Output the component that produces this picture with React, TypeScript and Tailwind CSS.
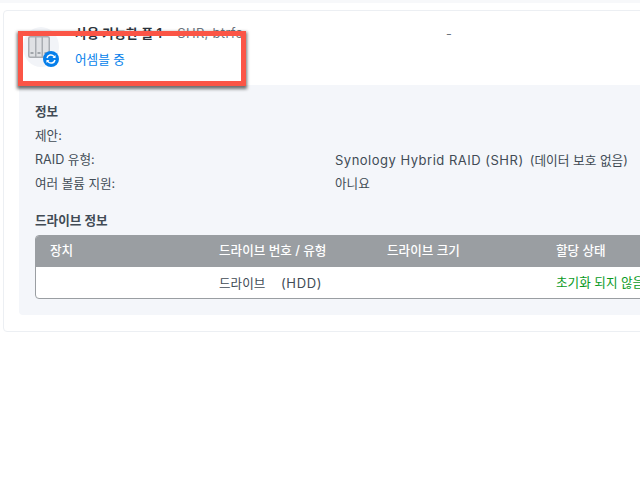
const font = "font-['Inter','Noto_Sans_CJK_KR',sans-serif]";

function PoolIcon() {
  return (
    <div className="relative w-9 h-10 shrink-0 rounded-[50%] bg-[#f2f4f8]">
      <svg width="22" height="22" viewBox="0 0 22 22" className="absolute left-[5px] top-[9px]">
        <rect x="0.75" y="0.75" width="20.500" height="20.500" rx="1.500" fill="#dfe1e4" stroke="#a9adb2" strokeWidth="1.500" />
        <path d="M7.750 1v20M14.250 1v20" stroke="#a9adb2" strokeWidth="1.500" />
        <path d="M2.500 17h3M9.500 17h3M16.500 17h3" stroke="#8d9298" strokeWidth="1.500" />
      </svg>
      <div className="absolute left-[20px] top-[24px] w-4 h-4 rounded-full bg-[#057feb] flex items-center justify-center">
        <svg width="12" height="12" viewBox="0 0 12 12" fill="none" stroke="#fff" strokeWidth="1.500">
          <path d="M2 5a4 4 0 0 1 7-1.600L10 4.500" />
          <path d="M10 7a4 4 0 0 1-7 1.600L2 7.500" />
          <path d="M10.500 2v3h-3" fill="#fff" stroke="none" />
          <path d="M1.500 10V7h3" fill="#fff" stroke="none" />
        </svg>
      </div>
    </div>
  );
}

export default function App() {
  return (
    <div className={`relative w-[640px] h-[480px] overflow-hidden bg-white text-[12.6px] text-[#414b55] ${font}`}>
      <div className="h-[3px] bg-[#f7f8fa]" />
      <div className="ml-[3px] mt-[7px] w-[660px] h-[322px] border border-[#eceff3] rounded-[4px] bg-white">
        <div className="h-[74px] flex pl-[19px] pt-[16px]">
          <PoolIcon />
          <div className="ml-[16px] w-[371px] flex flex-col">
            <div className="flex items-center h-[16px] -mt-[1px] whitespace-nowrap">
              <span className="font-semibold text-[13px] text-[#2b333b]">사용 가능한 풀 1</span>
              <span className="ml-[5px] text-[13px] tracking-[0.3px] text-[#6b747d]">- SHR, btrfs</span>
            </div>
            <div className="mt-[9px] text-[#057feb]">어셈블 중</div>
          </div>
          <div className="-mt-[2px] h-[16px] text-[#6b747d]">-</div>
        </div>
        <div className="ml-[15px] w-[640px] h-[230px] bg-[#f4f6fa] rounded-[4px] pl-[16px] pt-[19px]">
          <div className="font-semibold h-[16px] leading-[16px]">정보</div>
          <div className="mt-[8px] h-[16px] leading-[16px]">제안:</div>
          <div className="mt-[8px] h-[16px] leading-[16px] flex">
            <span className="w-[300px]">RAID 유형:</span>
            <span className="text-[13px] whitespace-nowrap tracking-[0.5px]">Synology Hybrid RAID (SHR) <span className="ml-[2px] text-[12.7px] tracking-normal">(데이터 보호 없음)</span></span>
          </div>
          <div className="mt-[8px] h-[16px] leading-[16px] flex">
            <span className="w-[300px]">여러 볼륨 지원:</span>
            <span>아니요</span>
          </div>
          <div className="mt-[21px] font-semibold h-[16px] leading-[16px]">드라이브 정보</div>
          <div className="mt-[6px] w-[640px] h-[64px] rounded-[4px] border border-[#9a9ea2] overflow-hidden bg-white">
            <div className="h-[31px] bg-[#9a9ea2] text-white font-medium flex items-center">
              <span className="pl-[14px] w-[183px]">장치</span>
              <span className="w-[168px] whitespace-nowrap">드라이브 번호 / 유형</span>
              <span className="w-[169px]">드라이브 크기</span>
              <span>할당 상태</span>
            </div>
            <div className="h-[31px] pt-[2px] flex items-center">
              <span className="w-[183px]" />
              <span className="w-[168px] whitespace-nowrap">드라이브 <span className="ml-[12px] text-[13px] tracking-[0.7px]">(HDD)</span></span>
              <span className="w-[169px]" />
              <span className="whitespace-nowrap text-[#0a9a1e]">초기화 되지 않음</span>
            </div>
          </div>
        </div>
      </div>
      <div className="absolute left-[18px] top-[31px] w-[228px] h-[55px] border-[5px] border-[#fb5546] shadow-[0_2px_3px_1px_rgba(40,40,40,0.65)]" />
    </div>
  );
}
